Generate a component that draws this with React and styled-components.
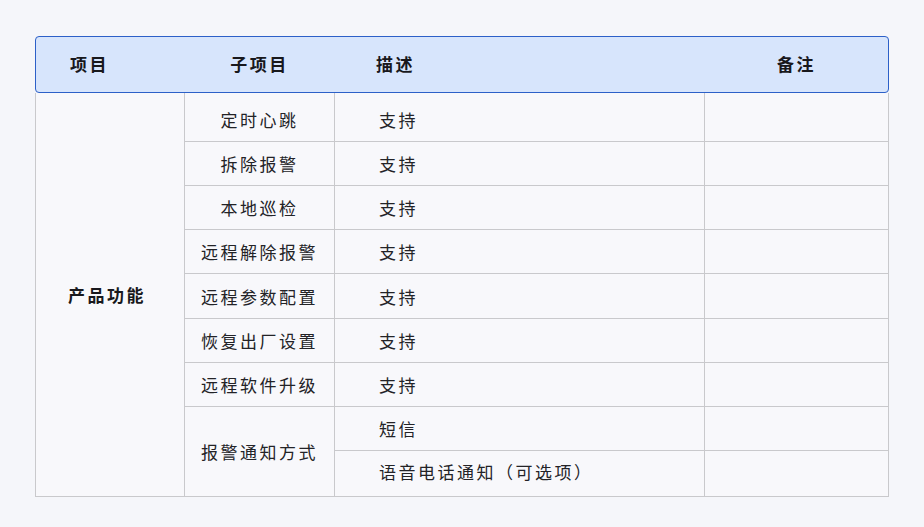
import React from "react";
import styled, { createGlobalStyle } from "styled-components";

const Global = createGlobalStyle`
  html, body { margin: 0; padding: 0; background: #f5f6fa; }
  body { font-family: "Noto Sans CJK SC", "Noto Sans", sans-serif; }
`;

const Page = styled.div`
  width: 924px;
  height: 527px;
  box-sizing: border-box;
  padding: 36px 0 0 35px;
  background: #f5f6fa;
`;

const COLS = "148px 149px 369px 183px";

const Header = styled.div`
  width: 854px;
  height: 57px;
  box-sizing: border-box;
  display: grid;
  grid-template-columns: ${COLS};
  column-gap: 1px;
  border: 1px solid #2c60c8;
  border-radius: 4px;
  background: #d7e5fc;
`;

const HeadCell = styled.div`
  display: flex;
  align-items: center;
  justify-content: ${(p) => (p.$align === "left" ? "flex-start" : "center")};
  padding-left: ${(p) => p.$pad || 0}px;
  padding-bottom: 2px;
  box-sizing: border-box;
  font-size: 17px;
  font-weight: 700;
  letter-spacing: 2.5px;
  color: #18181c;
  line-height: 1;
`;

const Body = styled.div`
  width: 854px;
  box-sizing: border-box;
  display: grid;
  grid-template-columns: ${COLS};
  grid-template-rows: 48px 43px 43px 43px 44px 43px 43px 43px 45px;
  gap: 1px;
  background: #c9c9cc;
  border: 1px solid #c9c9cc;
  border-top: none;
`;

const Cell = styled.div`
  background: #f8f8fb;
  display: flex;
  align-items: center;
  justify-content: ${(p) => (p.$align === "left" ? "flex-start" : "center")};
  padding-left: ${(p) => p.$pad || 0}px;
  padding-right: ${(p) => p.$pr || 0}px;
  padding-top: ${(p) => p.$pt || 0}px;
  padding-bottom: ${(p) => p.$pb || 0}px;
  box-sizing: border-box;
  font-size: 17px;
  font-weight: ${(p) => (p.$bold ? 700 : 400)};
  letter-spacing: 2.5px;
  color: ${(p) => (p.$bold ? "#18181c" : "#232327")};
  line-height: 1;
  grid-column: ${(p) => p.$col};
  grid-row: ${(p) => p.$row};
`;

const subs = [
  "定时心跳",
  "拆除报警",
  "本地巡检",
  "远程解除报警",
  "远程参数配置",
  "恢复出厂设置",
  "远程软件升级",
];

const descs = [
  "支持",
  "支持",
  "支持",
  "支持",
  "支持",
  "支持",
  "支持",
  "短信",
  "语音电话通知（可选项）",
];

function rowPad(i) {
  if (i === 0) return { pt: 5, pb: 0 };
  if (i === 8) return { pt: 0, pb: 5 };
  return { pt: 0, pb: 0 };
}

export default function App() {
  return (
    <Page>
      <Global />
      <Header>
        <HeadCell $align="left" $pad={34}>项目</HeadCell>
        <HeadCell>子项目</HeadCell>
        <HeadCell $align="left" $pad={41}>描述</HeadCell>
        <HeadCell>备注</HeadCell>
      </Header>
      <Body>
        <Cell $col="1" $row="1 / 10" $bold $pr={6}>产品功能</Cell>
        {subs.map((s, i) => {
          const p = rowPad(i);
          return (
            <Cell key={s} $col="2" $row={`${i + 1}`} $pt={p.pt} $pb={p.pb}>
              {s}
            </Cell>
          );
        })}
        <Cell $col="2" $row="8 / 10">报警通知方式</Cell>
        {descs.map((d, i) => {
          const p = rowPad(i);
          return (
            <Cell
              key={`d${i}`}
              $col="3"
              $row={`${i + 1}`}
              $align="left"
              $pad={44}
              $pt={p.pt}
              $pb={p.pb}
            >
              {d}
            </Cell>
          );
        })}
        {descs.map((_, i) => (
          <Cell key={`n${i}`} $col="4" $row={`${i + 1}`} />
        ))}
      </Body>
    </Page>
  );
}
